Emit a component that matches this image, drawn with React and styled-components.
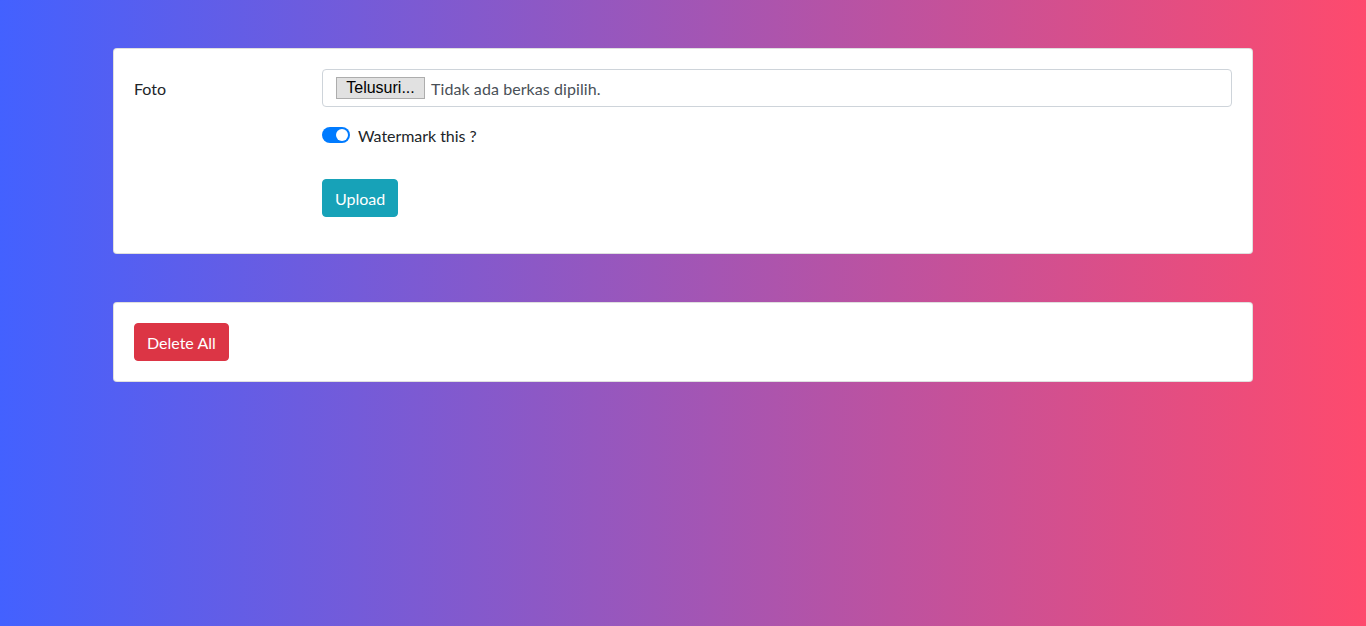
import React from "react";
import styled, { createGlobalStyle } from "styled-components";

const Global = createGlobalStyle`
  html, body { margin: 0; padding: 0; }
  body {
    min-height: 100vh;
    background: linear-gradient(to right, #4361ff, #fe4a6d);
    font-family: Lato, "Open Sans", sans-serif;
    font-size: 16px;
    line-height: 1.5;
    color: #212529;
  }
  * { box-sizing: border-box; }
`;

const Page = styled.div`
  width: 1140px;
  margin: 0 auto;
  padding-top: 48px;
  display: flex;
  flex-direction: column;
  gap: 48px;
`;

const Card = styled.div`
  background: #fff;
  border: 1px solid rgba(0, 0, 0, 0.125);
  border-radius: 4px;
  padding: 20px;
`;

const Row = styled.div`
  display: grid;
  grid-template-columns: 188px 1fr;
  margin-bottom: ${(p) => p.$mb || 16}px;
`;

const Label = styled.label`
  padding-top: 8px;
  padding-bottom: 6px;
  line-height: 24px;
`;

const FileBox = styled.div`
  height: 38px;
  border: 1px solid #ced4da;
  border-radius: 4px;
  display: flex;
  align-items: center;
  padding: 0 12px 0 13px;
  color: #495057;
`;

const FileName = styled.span`
  padding-top: 2px;
  letter-spacing: 0.08px;
`;

const FileButton = styled.span`
  display: inline-flex;
  align-items: center;
  justify-content: center;
  height: 22px;
  width: 89px;
  background: #e1e1e1;
  border: 1px solid #adadad;
  color: #000;
  font-family: "Liberation Sans", Arial, sans-serif;
  font-size: 16px;
  margin-right: 6px;
`;

const SwitchLine = styled.div`
  grid-column: 2;
  display: flex;
  align-items: center;
  gap: 8px;
  height: 24px;
`;

const Switch = styled.span`
  position: relative;
  width: 28px;
  height: 16px;
  border-radius: 8px;
  background: #007bff;
  display: inline-block;
  &::after {
    content: "";
    position: absolute;
    top: 2px;
    right: 2px;
    width: 12px;
    height: 12px;
    border-radius: 50%;
    background: #fff;
  }
`;

const SwitchText = styled.span`
  padding-top: 2px;
  letter-spacing: -0.05px;
`;

const Button = styled.button`
  grid-column: ${(p) => p.$col || "auto"};
  justify-self: start;
  height: 38px;
  padding: 2px 12px 0;
  border: 1px solid ${(p) => p.$bg};
  background: ${(p) => p.$bg};
  color: #fff;
  border-radius: 4px;
  font-family: Lato, "Open Sans", sans-serif;
  font-size: 16px;
  line-height: 24px;
  cursor: pointer;
`;

export default function App() {
  return (
    <>
      <Global />
      <Page>
        <Card>
          <Row>
            <Label>Foto</Label>
            <FileBox>
              <FileButton>Telusuri...</FileButton>
              <FileName>Tidak ada berkas dipilih.</FileName>
            </FileBox>
          </Row>
          <Row $mb={32}>
            <SwitchLine>
              <Switch />
              <SwitchText>Watermark this ?</SwitchText>
            </SwitchLine>
          </Row>
          <Row>
            <Button $col={2} $bg="#17a2b8">Upload</Button>
          </Row>
        </Card>
        <Card>
          <Button $bg="#dc3545">Delete All</Button>
        </Card>
      </Page>
    </>
  );
}
